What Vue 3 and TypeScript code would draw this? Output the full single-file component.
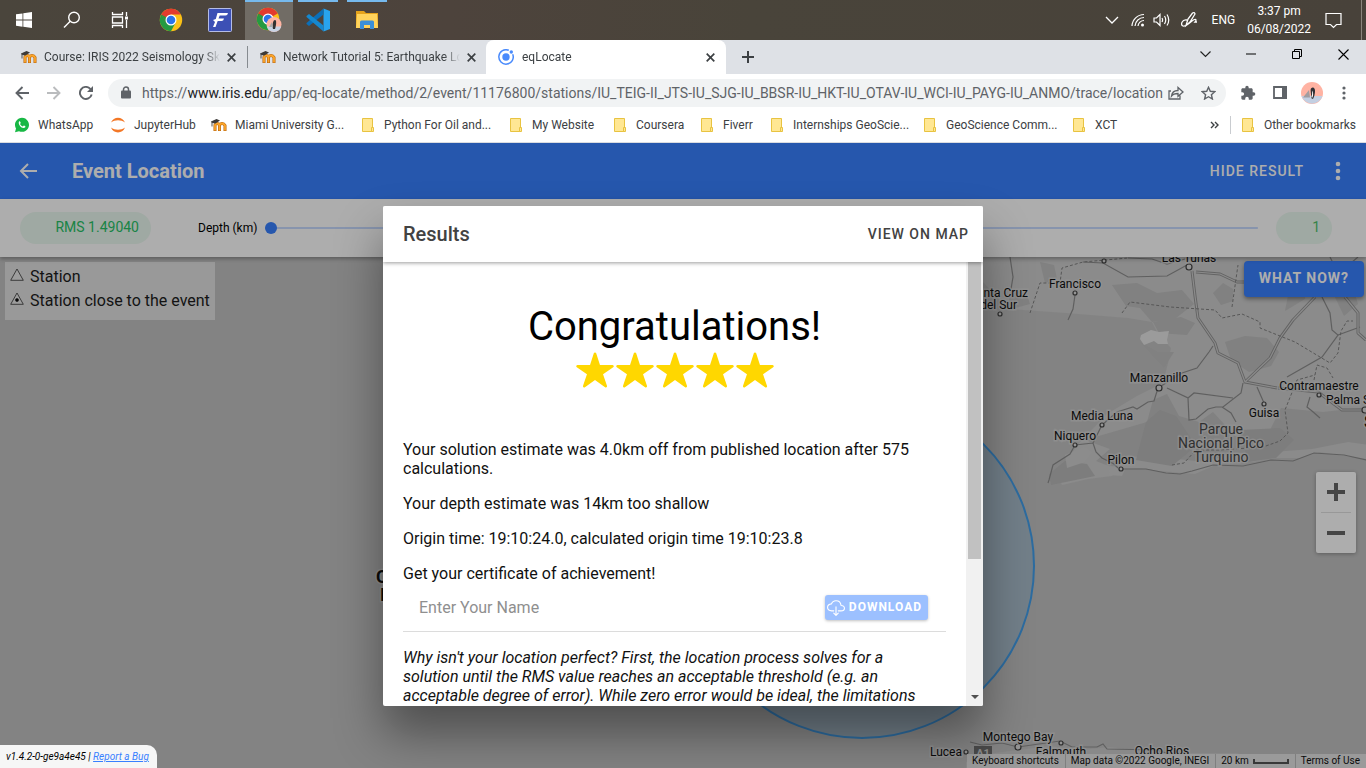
<script setup lang="ts">
import { ref } from 'vue'

interface Bookmark { label: string; icon: 'whatsapp' | 'jupyter' | 'moodle' | 'folder' }
interface Place { name: string; x: number; y: number; anchor?: 'start' | 'middle' | 'end'; kind?: 'park' | 'bold' }

const bookmarks: Bookmark[] = [
  { label: 'WhatsApp', icon: 'whatsapp' },
  { label: 'JupyterHub', icon: 'jupyter' },
  { label: 'Miami University G...', icon: 'moodle' },
  { label: 'Python For Oil and...', icon: 'folder' },
  { label: 'My Website', icon: 'folder' },
  { label: 'Coursera', icon: 'folder' },
  { label: 'Fiverr', icon: 'folder' },
  { label: 'Internships GeoScie...', icon: 'folder' },
  { label: 'GeoScience Comm...', icon: 'folder' },
  { label: 'XCT', icon: 'folder' },
]

const places: Place[] = [
  { name: 'Las Tunas', x: 1189, y: 262 },
  { name: 'Francisco', x: 1075, y: 288 },
  { name: 'Santa Cruz', x: 1028, y: 297, anchor: 'end' },
  { name: 'del Sur', x: 1017, y: 309, anchor: 'end' },
  { name: 'Manzanillo', x: 1159, y: 382 },
  { name: 'Media Luna', x: 1102, y: 420 },
  { name: 'Niquero', x: 1075, y: 440 },
  { name: 'Pilon', x: 1121, y: 464 },
  { name: 'Guisa', x: 1264, y: 417 },
  { name: 'Contramaestre', x: 1319, y: 390 },
  { name: 'Palma Soriano', x: 1326, y: 404, anchor: 'start' },
  { name: 'Parque', x: 1221, y: 434, kind: 'park' },
  { name: 'Nacional Pico', x: 1221, y: 448, kind: 'park' },
  { name: 'Turquino', x: 1221, y: 462, kind: 'park' },
  { name: 'Santiago', x: 1364, y: 428, anchor: 'start', kind: 'bold' },
  { name: 'Cayman', x: 376, y: 583, anchor: 'start', kind: 'bold' },
  { name: 'Islands', x: 380, y: 601, anchor: 'start', kind: 'bold' },
  { name: 'Montego Bay', x: 1018, y: 741 },
  { name: 'Falmouth', x: 1061, y: 756 },
  { name: 'Ocho Rios', x: 1162, y: 755 },
  { name: 'Lucea', x: 946, y: 756 },
]

const towns: [number, number, number][] = [
  [1104, 261, 2], [1189, 267, 3], [1075, 293, 2], [1000, 314, 2], [1159, 388, 3],
  [1102, 425, 2], [1075, 445, 2], [1121, 469, 2], [1264, 404, 2], [1319, 395, 2],
  [1365, 410, 3], [1018, 747, 3], [1061, 743, 2], [966, 752, 2],
]

const depth = ref(0)
const name = ref('')
</script>

<template>
  <div class="screen">
    <header class="taskbar">
      <nav class="launchers" aria-label="Taskbar">
        <button aria-label="Start"><svg width="16" height="16" viewBox="0 0 16 16" fill="#fff"><path d="M0 2.300 6.500 1.400V7.600H0zM7.300 1.300 16 0v7.600H7.300zM0 8.400h6.500v6.300L0 13.800zM7.300 8.400H16V16L7.300 14.800z" /></svg></button>
        <button aria-label="Search"><svg width="18" height="18" viewBox="0 0 18 18" fill="none" stroke="#fff" stroke-width="1.400"><circle cx="11" cy="6.500" r="5.300" /><path d="M7.200 10.300 1 16.500" /></svg></button>
        <button aria-label="Task view"><svg width="18" height="18" viewBox="0 0 18 18" fill="none" stroke="#fff" stroke-width="1.300"><path d="M1.500 1v2.500h10V1M1.500 17v-2.500h10V17M1.500 6h10v6h-10zM15.500 1v4M15.500 9v8" /><path d="M14 5.500h3v3h-3z" fill="#fff" stroke="none" /></svg></button>
        <button aria-label="Chrome">
          <svg width="24" height="24" viewBox="0 0 24 24"><circle cx="12" cy="12" r="11.200" fill="#fbc116" /><path d="M12 12 2.300 6.400A11.200 11.200 0 0 1 21.700 6.400z" fill="#e33b2e" /><path d="M2.300 6.400A11.200 11.200 0 0 0 12 23.200L16.400 15 12 12z" fill="#249a41" /><path d="M12 6.400h9.700l-5 8.200z" fill="#fbc116" /><path d="M2.300 6.400 12 6.400v5.600l-5 2.500z" fill="#e33b2e" /><path d="M2.300 6.400 7.100 14.700 12 12z" fill="#249a41" /><circle cx="12" cy="12" r="5.500" fill="#fff" /><circle cx="12" cy="12" r="4.300" fill="#2b74e8" /></svg>
        </button>
        <button aria-label="Fusion"><svg width="24" height="24" viewBox="0 0 24 24"><rect x=".5" y=".5" width="23" height="23" rx="1" fill="#3c50b5" stroke="#b4bce6" /><path d="M9.500 5H20q-.500 2.500-2.500 2.500h-5.800l-1.200 3H16q-.500 2.500-2.500 2.500H9.700L7.500 19H5l2-5-2-2 2.800-1z" fill="#fff" /></svg></button>
        <button class="running current" aria-label="Chrome, profile window">
          <svg width="28" height="26" viewBox="0 0 28 26"><circle cx="13" cy="12" r="11.200" fill="#fbc116" /><path d="M13 12 3.300 6.400A11.200 11.200 0 0 1 22.700 6.400z" fill="#e33b2e" /><path d="M3.300 6.400A11.200 11.200 0 0 0 13 23.200L17.400 15z" fill="#249a41" /><path d="M3.300 6.400H13V12l-5 2.500z" fill="#e33b2e" /><path d="M3.300 6.400 8.100 14.700 13 12z" fill="#249a41" /><circle cx="13" cy="12" r="5.500" fill="#fff" /><circle cx="13" cy="12" r="4.300" fill="#2b74e8" /><circle cx="19" cy="17.500" r="7.500" fill="#ffb4a2" /><path d="M11.800 19.500a7.500 7.500 0 0 0 14.400 0z" fill="#c8d3e4" /><path d="M18 22c-1-4 0-9 2-9s1 6 0 9z" fill="#333" /><path d="M14 20l3-5 1 5z" fill="#aaa" /></svg>
        </button>
        <button class="running" aria-label="Visual Studio Code"><svg width="24" height="24" viewBox="0 0 24 24"><path d="M17.500.500 24 3v18l-6.500 2.500z" fill="#28a4ee" /><path d="M17.500.500v6L3 18 .500 16 .500 15z" fill="#0b6fb8" /><path d="M17.500 23.500v-6L3 6 .500 8v1z" fill="#1588cf" /></svg></button>
        <button class="running" aria-label="File Explorer"><svg width="22" height="20" viewBox="0 0 22 20"><path d="M0 1h8l2 2h12v15H0z" fill="#e5a31c" /><path d="M1 4h20l1 14H0z" fill="#ffd35c" /><path d="M4 19v-7q0-1.500 1.500-1.500h11Q18 10.500 18 12v7h-4v-4H8v4z" fill="#3a8fd8" /></svg></button>
      </nav>
      <div class="tray">
        <button class="tray-up" aria-label="Show hidden icons"><svg width="14" height="8" viewBox="0 0 14 8" fill="none" stroke="#fff" stroke-width="1.300"><path d="m1 1 6 6 6-6" /></svg></button>
        <svg width="14" height="14" viewBox="0 0 14 14" fill="none" stroke="#fff" stroke-width="1.200"><path d="M1 13A12 12 0 0 1 13 1.500M4 13a9 9 0 0 1 9-8.500M7 13a6 6 0 0 1 6-5.500" /><circle cx="11.500" cy="12" r="1.500" fill="#fff" stroke="none" /></svg>
        <svg width="17" height="14" viewBox="0 0 17 14" fill="none" stroke="#fff" stroke-width="1.200"><path d="M1 5h2.500L7 1.500v11L3.500 9H1zM9 5q1.200 2 0 4M11.500 3q2.500 4 0 8M14 1.500q3.500 5.500 0 11" /></svg>
        <svg class="pen" width="18" height="18" viewBox="0 0 18 18" fill="none" stroke="#fff" stroke-width="1.300"><path d="M6 14.500 8 8l4.500-6q2-1.200 2.500 1L10 11zM7 9c-5-1-7 5-4 6s5-2 9-5 5-1 3 1h2" /></svg>
        <span class="lang">ENG</span>
        <time class="clock">3:37 pm<br>06/08/2022</time>
        <button class="notice" aria-label="Notifications"><svg width="17" height="17" viewBox="0 0 17 17" fill="none" stroke="#fff" stroke-width="1.200"><path d="M1 1.500h15v11h-4.500l-3 3-3-3H1z" /></svg></button>
      </div>
    </header>

    <div class="tabstrip">
      <div class="tab first">
        <svg class="fav" width="16" height="16" viewBox="0 0 16 16" fill="none"><path d="M4 14V8q.500-1.500 2-1.500T8.500 8v6m0-6q.500-1.500 2.500-1.500T14 8.500V14" stroke="#b8640c" stroke-width="3" /><path d="M4 13.500V8q.500-1.500 2-1.500T8.500 8v5.500m0-5.500q.500-1.500 2.500-1.500T14 8.500v5" stroke="#fba52b" stroke-width="1.800" /><path d="M0 4.500 5.500 2 9 3.500 4.500 6.500 1 6z" fill="#3c3a38" /><path d="M1 4.500v5" stroke="#555" /></svg>
        <a class="tab-title" href="#">Course: IRIS 2022 Seismology Skills</a>
        <button class="shut" aria-label="Close tab"><svg width="9" height="9" viewBox="0 0 9 9" stroke="#3c4043" stroke-width="1.700"><path d="m.700.700 7.600 7.600M8.300.700.700 8.300" /></svg></button>
      </div>
      <div class="tab">
        <svg class="fav" width="16" height="16" viewBox="0 0 16 16" fill="none"><path d="M4 14V8q.500-1.500 2-1.500T8.500 8v6m0-6q.500-1.500 2.500-1.500T14 8.500V14" stroke="#b8640c" stroke-width="3" /><path d="M4 13.500V8q.500-1.500 2-1.500T8.500 8v5.500m0-5.500q.500-1.500 2.500-1.500T14 8.500v5" stroke="#fba52b" stroke-width="1.800" /><path d="M0 4.500 5.500 2 9 3.500 4.500 6.500 1 6z" fill="#3c3a38" /><path d="M1 4.500v5" stroke="#555" /></svg>
        <a class="tab-title" href="#">Network Tutorial 5: Earthquake Location</a>
        <button class="shut" aria-label="Close tab"><svg width="9" height="9" viewBox="0 0 9 9" stroke="#3c4043" stroke-width="1.700"><path d="m.700.700 7.600 7.600M8.300.700.700 8.300" /></svg></button>
      </div>
      <div class="tab active">
        <svg class="fav" width="16" height="16" viewBox="0 0 16 16"><path d="M10.800 1.300A7.200 7.200 0 1 0 14.700 5.200" fill="none" stroke="#4a8bfc" stroke-width="1.500" /><circle cx="8" cy="8" r="3.700" fill="#4a8bfc" /><circle cx="13.300" cy="3" r="1.700" fill="#4a8bfc" /></svg>
        <a class="tab-title" href="#">eqLocate</a>
        <button class="shut" aria-label="Close tab"><svg width="9" height="9" viewBox="0 0 9 9" stroke="#3c4043" stroke-width="1.700"><path d="m.700.700 7.600 7.600M8.300.700.700 8.300" /></svg></button>
      </div>
      <button class="new-tab" aria-label="New tab"><svg width="12" height="12" viewBox="0 0 12 12" stroke="#3c4043" stroke-width="2"><path d="M6 0v12M0 6h12" /></svg></button>
      <div class="window-controls">
        <button aria-label="Search tabs"><svg width="11" height="7" viewBox="0 0 11 7" fill="none" stroke="#222" stroke-width="1.200"><path d="m.500.500 5 5 5-5" /></svg></button>
        <button aria-label="Minimise"><svg width="10" height="2" viewBox="0 0 10 2"><path d="M0 .500h10v1H0z" fill="#000" /></svg></button>
        <button aria-label="Restore"><svg width="10" height="10" viewBox="0 0 10 10" fill="none" stroke="#000"><path d="M.500 2.500h7v7h-7zM2.500 2.500v-2h7v7h-2" /></svg></button>
        <button aria-label="Close"><svg width="11" height="11" viewBox="0 0 11 11" stroke="#000" stroke-width="1.100"><path d="m.500.500 10 10M10.500.500l-10 10" /></svg></button>
      </div>
    </div>

    <div class="navbar">
      <button class="nav-btn" aria-label="Back"><svg width="14" height="14" viewBox="0 0 14 14" fill="none" stroke="#5f6368" stroke-width="1.900"><path d="M14 7H1.500M7.500 1l-6 6 6 6" /></svg></button>
      <button class="nav-btn" aria-label="Forward"><svg width="14" height="14" viewBox="0 0 14 14" fill="none" stroke="#babcbe" stroke-width="1.900"><path d="M0 7h12.500M6.500 1l6 6-6 6" /></svg></button>
      <button class="nav-btn" aria-label="Reload"><svg width="14" height="14" viewBox="0 0 14 14" fill="none" stroke="#5f6368" stroke-width="1.900"><path d="M12.700 8.500A6 6 0 1 1 11.300 2.800L13 4.500" /><path d="M14 0v6H8z" fill="#5f6368" stroke="none" /></svg></button>
      <div class="omnibox">
        <svg width="10" height="13" viewBox="0 0 10 13"><path d="M2.500 5V3.500a2.500 2.500 0 0 1 5 0V5" fill="none" stroke="#5f6368" stroke-width="1.500" /><rect x="0" y="4.500" width="10" height="8" rx="1" fill="#5f6368" /></svg>
        <a class="url" href="#">https://<b>www.iris.edu</b>/app/eq-locate/method/2/event/11176800/stations/IU_TEIG-II_JTS-IU_SJG-IU_BBSR-IU_HKT-IU_OTAV-IU_WCI-IU_PAYG-IU_ANMO/trace/location</a>
        <button aria-label="Share"><svg width="16" height="14" viewBox="0 0 16 14" fill="none" stroke="#5f6368" stroke-width="1.300"><path d="M3 5H1v8h11V9.500M3.500 10c.500-4 3-5.500 6.500-5.500V1.500l5 4.500-5 4.300V7.500C7 7.500 5 8 3.500 10z" /></svg></button>
        <button aria-label="Bookmark this tab"><svg width="15" height="14" viewBox="0 0 15 14" fill="none" stroke="#5f6368" stroke-width="1.400"><path d="m7.500 1.300 1.800 4 4.500.400-3.400 3 1 4.300-3.900-2.300L3.600 13l1-4.300-3.400-3 4.500-.400z" /></svg></button>
      </div>
      <button class="tool" aria-label="Extensions"><svg width="16" height="16" viewBox="0 0 24 24" fill="#5f6368"><path d="M20.500 11H19V7c0-1.100-.900-2-2-2h-4V3.500a2.500 2.500 0 0 0-5 0V5H4c-1.100 0-2 .900-2 2v3.800h1.500a2.700 2.700 0 0 1 0 5.400H2V20c0 1.100.900 2 2 2h3.800v-1.500a2.700 2.700 0 0 1 5.400 0V22H17c1.100 0 2-.900 2-2v-4h1.500a2.500 2.500 0 0 0 0-5z" /></svg></button>
      <button class="tool" aria-label="Side panel"><svg width="14" height="13" viewBox="0 0 14 13"><path d="M1 1h12v11H1z" fill="#fff" stroke="#5f6368" stroke-width="1.800" /><path d="M9 0h5v13H9z" fill="#5f6368" /></svg></button>
      <button class="tool" aria-label="Profile"><svg width="22" height="22" viewBox="0 0 22 22"><circle cx="11" cy="11" r="11" fill="#ffb3a3" /><path d="M.500 14a11 11 0 0 0 21 0z" fill="#c3cfe2" /><path d="M2 15.500 8 8l1 7.500z" fill="#a29da0" /><path d="M10 16c.500-4-1-8 0-9.500 2-2 4.500-.500 4 3.500-.300 3-1 5-2 7z" fill="#303036" /><path d="M10.200 15.500q1.500-4 .800-7 2 3 .500 7z" fill="#fff" /></svg></button>
      <button class="menu" aria-label="Chrome menu"><svg width="4" height="14" viewBox="0 0 4 14" fill="#5f6368"><circle cx="2" cy="2" r="1.600" /><circle cx="2" cy="7" r="1.600" /><circle cx="2" cy="12" r="1.600" /></svg></button>
    </div>

    <nav class="bookmarks" aria-label="Bookmarks">
      <ul>
        <li v-for="b in bookmarks" :key="b.label">
          <a href="#">
            <svg v-if="b.icon === 'whatsapp'" width="16" height="16" viewBox="0 0 16 16"><path d="M1 15.200 2 11.500A7 7 0 1 1 5 14.200z" fill="#18b845" /><path d="M5 4.500c1-1 1.500.500 1.800 1.500L6 7c.600 1.200 1.500 2 2.800 2.500l1-1c1 .300 2 .800 1.500 1.700C9 13 3.500 8 5 4.500z" fill="#fff" /></svg>
            <svg v-else-if="b.icon === 'jupyter'" width="16" height="16" viewBox="0 0 16 16" fill="#f37726"><path d="M1 5.500C3.500-1 12.500-1 15 5.500 11 2.500 5 2.500 1 5.500zM1 10.500C3.500 17 12.500 17 15 10.500c-4 3-10 3-14 0z" /></svg>
            <svg v-else-if="b.icon === 'moodle'" width="16" height="16" viewBox="0 0 16 16" fill="none"><path d="M4 14V8q.500-1.500 2-1.500T8.500 8v6m0-6q.500-1.500 2.500-1.500T14 8.500V14" stroke="#b8640c" stroke-width="3" /><path d="M4 13.500V8q.500-1.500 2-1.500T8.500 8v5.500m0-5.500q.500-1.500 2.500-1.500T14 8.500v5" stroke="#fba52b" stroke-width="1.800" /><path d="M0 4.500 5.500 2 9 3.500 4.500 6.500 1 6z" fill="#3c3a38" /><path d="M1 4.500v5" stroke="#555" /></svg>
            <svg v-else width="16" height="16" viewBox="0 0 16 16" fill="#ffe793" stroke="#e8c341"><path d="M2.500 1.500h10v13h-10z" /><path d="M11.500 10.500h2v4h-2z" /></svg>
            <span>{{ b.label }}</span>
          </a>
        </li>
      </ul>
      <button class="more" aria-label="More bookmarks"><svg width="9" height="8" viewBox="0 0 9 8" fill="none" stroke="#3c4043" stroke-width="1.400"><path d="m1 1 3 3-3 3M5 1l3 3-3 3" /></svg></button>
      <a class="other" href="#"><svg width="16" height="16" viewBox="0 0 16 16" fill="#ffe793" stroke="#e8c341"><path d="M2.500 1.500h10v13h-10z" /><path d="M11.500 10.500h2v4h-2z" /></svg><span>Other bookmarks</span></a>
    </nav>

    <main class="app">
      <header class="app-header">
        <button aria-label="Back"><svg width="18" height="16" viewBox="0 0 18 16" fill="none" stroke="#fff" stroke-width="2"><path d="M18 8H2M9 1 2 8l7 7" /></svg></button>
        <h1>Event Location</h1>
        <button class="text-btn">HIDE RESULT</button>
        <button class="dots" aria-label="More"><svg width="6" height="20" viewBox="0 0 6 20" fill="#fff"><circle cx="3" cy="3" r="2.300" /><circle cx="3" cy="10" r="2.300" /><circle cx="3" cy="17" r="2.300" /></svg></button>
      </header>

      <div class="controls">
        <span class="chip rms">RMS 1.49040</span>
        <label for="depth">Depth (km)</label>
        <input id="depth" v-model="depth" type="range" min="0" max="100">
        <output class="chip count" for="depth">1</output>
      </div>

      <section class="map" aria-label="Map">
        <svg class="canvas" viewBox="0 257 1366 511" preserveAspectRatio="xMaxYMid slice">
          <rect y="257" width="1366" height="511" fill="#c2c2c2" />
          <path d="M960 257H1366V459l-28-4-18-3-20 6-25 0-22 4-20-1-20 5-18 8-35-3-20-3-20 1-8 7-24 3-26 6-2-5 3-12 8-14 10-13 26-27 30-18 26-13 5-20 3-15-13-14-6-12-24-4-62-5-58-4z" fill="#cdcdcd" />
          <g fill="#bebebe">
            <path d="M1112 285l25-2 20 10 25-3 12 14-18 14-24 4-12-14-14-2zM1010 290l16 2 4 12-22 6zM1213 293l10-10 10 6v12l-12 4zM1153 322l28-5 14 6-8 12-28-2zM1225 342l20-6 22 2 12 14-8 14-22 6-18-12zM1330 287l22-3 6 20-14 12zM1140 342l18 10 16 0-10 16zM1040 262l14 3 3 14-12 4zM1290 285l18-6-3 20-20 12z" />
            <path d="M1085 440l62-18 6-22 14-6 12 22 20 6 14-10 22 24 34-4 12-24 42 4 55-6v40l-30-4-36 7-40 3-40 1-25 9-60-6-18 1-15 11-18-7 14-12z" />
          </g>
          <path d="M1049 474l16-13 22 3 8 12-44 9zM1160 410l16 6 20 30-24 20-36-6 10-38zM1240 430l40-2 14 12-18 18-28 4z" fill="#b8b8b8" />
          <path d="M1065 455l19-8 9 5-8 10-18 6zM1110 466l16 1-4 9-13-1z" fill="#cecece" />
          <path d="M1141 335l10-5 8 2 10-1-2 9 1 4-10 0-4-3-10 4-4-6z" fill="#e5e5e5" />
          <path d="M966 768v-6l14-7 30-4 40-5 30 4 30-3 46 6h80l30 8v7z" fill="#cacaca" />

          <g fill="none" stroke="#8d8d8d" stroke-width="1.200">
            <path d="M1010 257l3 20-2 12M1083 262l20 1 25 14 39-1 20-11M1075 295l-2 14-5 11M1128 258l24 1 15 5 18-5M1322 297l8 16 2 17 6 5-16 22-35 20M1330 257l5 10M1358 257l-14 12" />
            <path d="M1048 483l1-3 4-15 17-11 5-9 18-2 9-18 15-13 16-5 4 2 11-7 6-1 4-13 24-15 15-5 12-16 4-6M1093 443l3 9 6 6 12 6 4 4M1121 469l25 0 20 4 14 1 12-3 21-6 30 1 28-6 22 1 21-8 30 2 23 5" />
            <path d="M1167 388l21 10 1 22 7-1 12-10 8-2 7 0 18-14 2-10M1188 398l6-5 39 5M1222 407l9 6 5 9M1257 387l7 16M1310 397l-3 10 5 4 8 7M1338 335l22-8" />
            <path d="M970 742l12 3 20-2 16 4 42-6 12 6 25 0 6-3 4 5 50 1 22 7" />
          </g>
          <g fill="none" stroke="#929292" stroke-width="3" stroke-linejoin="round">
            <path d="M1192 271l3 25 3 22 17 25 3 10 20 10 7 19 32 6M1196 272l24 2 17 8h8M1245 382l25-24 10-20 13-18 22-23M1278 388l40 4 24 18h24M1345 297l13 16v20l8 7" />
          </g>
          <g fill="none" stroke="#cdcdcd" stroke-width="1.200" stroke-linejoin="round">
            <path d="M1192 271l3 25 3 22 17 25 3 10 20 10 7 19 32 6M1196 272l24 2 17 8h8M1245 382l25-24 10-20 13-18 22-23M1278 388l40 4 24 18h24M1345 297l13 16v20l8 7" />
          </g>
          <g fill="none" stroke="#818181" stroke-dasharray="3 2">
            <path d="M1030 313l10-30 20 0 2-15 21-6 45-4M1122 313l8-11 40 5 45 3 7 8 20-4 18 8v6l35 14 35 21 8-10 3-22 6-10h6M1232 307l6-42M1172 465l12-2 12-13 24 0 43-3 17-6 8-8-3-23 12-30 18-5" />
            <path d="M1314 380l3-15 10 3 6 10" />
          </g>
          <path d="M974 746h18v14h-18z" fill="#6d6d6d" />
          <text class="shield" x="983" y="757" text-anchor="middle">A1</text>

          <circle class="radius" cx="862" cy="566" r="172" />

          <circle v-for="(t, i) in towns" :key="i" :cx="t[0]" :cy="t[1]" :r="t[2]" fill="#dadada" stroke="#444" stroke-width="1.200" />
          <text v-for="p in places" :key="p.name" :x="p.x" :y="p.y" :text-anchor="p.anchor ?? 'middle'" class="place" :class="p.kind">{{ p.name }}</text>
        </svg>

        <ul class="legend">
          <li><svg width="14" height="13" viewBox="0 0 14 13" fill="#e8e8e8" stroke="#333" stroke-width=".8"><path d="M7 1 .700 12.300h12.600z" /></svg>Station</li>
          <li><svg width="14" height="13" viewBox="0 0 14 13" fill="#e8e8e8" stroke="#333" stroke-width=".8"><path d="M7 1 .700 12.300h12.600z" /><circle cx="7" cy="8" r="1.500" fill="#000" /></svg>Station close to the event</li>
        </ul>
        <button class="what-now">WHAT NOW?</button>
        <div class="zoom">
          <button aria-label="Zoom in"><svg width="18" height="18" viewBox="0 0 18 18" fill="#666"><path d="M7 0h4v7h7v4h-7v7H7v-7H0V7h7z" /></svg></button>
          <button aria-label="Zoom out"><svg width="18" height="4" viewBox="0 0 18 4" fill="#666"><path d="M0 0h18v4H0z" /></svg></button>
        </div>
        <footer class="credits">
          <button>Keyboard shortcuts</button>
          <span>Map data ©2022 Google, INEGI</span>
          <button class="scale">20 km <i></i></button>
          <a href="#">Terms of Use</a>
        </footer>
      </section>

      <div class="backdrop">
        <section class="modal" role="dialog" aria-labelledby="results-title">
          <header class="modal-header">
            <h2 id="results-title">Results</h2>
            <button>VIEW ON MAP</button>
          </header>
          <div class="modal-main">
            <div class="modal-body">
              <p class="congrats">Congratulations!</p>
              <div class="stars" role="img" aria-label="Five stars">
                <svg v-for="n in 5" :key="n" width="40" height="40" viewBox="0 0 512 512" fill="#ffd700"><path d="M394 480a16 16 0 01-9.390-3L256 383.760 127.390 477a16 16 0 01-24.550-18.080L153 310.350 23 221.200a16 16 0 019-29.200h160.380l48.400-148.950a16 16 0 0130.440 0l48.400 149H480a16 16 0 019.050 29.200L359 310.350l50.130 148.530A16 16 0 01394 480z" /></svg>
              </div>
              <p>Your solution estimate was 4.0km off from published location after 575 calculations.</p>
              <p>Your depth estimate was 14km too shallow</p>
              <p>Origin time: 19:10:24.0, calculated origin time 19:10:23.8</p>
              <p class="lead"><label for="cert-name">Get your certificate of achievement!</label></p>
              <form class="item" @submit.prevent>
                <input id="cert-name" v-model="name" type="text" placeholder="Enter Your Name">
                <button class="download" type="submit">
                  <svg width="18" height="18" viewBox="0 0 512 512" fill="none" stroke="#fff" stroke-width="32" stroke-linecap="round" stroke-linejoin="round"><path d="M320 336h76c55 0 100-21.210 100-75.600s-53-73.470-96-75.600C391.110 99.740 329 48 256 48c-69 0-113.440 45.790-128 91.200-60 5.700-112 35.880-112 98.400S70 336 136 336h56M192 400.100l64 63.900 64-63.900M256 224v224" /></svg>
                  DOWNLOAD
                </button>
              </form>
              <p class="why"><em>Why isn't your location perfect? First, the location process solves for a solution until the RMS value reaches an acceptable threshold (e.g. an acceptable degree of error). While zero error would be ideal, the limitations</em></p>
            </div>
            <div class="scrollbar" aria-hidden="true">
              <div class="thumb"></div>
              <svg width="8" height="4" viewBox="0 0 8 4" fill="#505050"><path d="M0 0h8L4 4z" /></svg>
            </div>
          </div>
        </section>
      </div>

      <div class="version">v1.4.2-0-ge9a4e45 | <a href="#">Report a Bug</a></div>
    </main>
  </div>
</template>

<style>
body { margin: 0; }
</style>

<style scoped>
* { box-sizing: border-box; }
button {
  display: flex; align-items: center; justify-content: center;
  margin: 0; padding: 0; border: 0; background: none; color: inherit; font: inherit;
}
a { color: inherit; text-decoration: none; }
ul { list-style: none; margin: 0; padding: 0; }
svg { flex: none; display: block; }

.screen {
  display: flex; flex-direction: column; height: 100vh; overflow: hidden;
  font-family: Roboto, "Open Sans", sans-serif; font-size: 12px; color: #3c4043;
}

.taskbar { display: flex; justify-content: space-between; flex: none; height: 40px; background: linear-gradient(90deg, #4a453c, #4d433c 33%, #49443a 55%, #48423a); }
.launchers { display: flex; }
.launchers button { position: relative; width: 48px; height: 40px; margin-right: 1px; }
.launchers button:nth-child(-n+2) { margin-right: 0; }
.launchers button:nth-child(3) { margin-right: 3px; }
.launchers .current { background: #716c65; }
.running::before { content: ""; position: absolute; top: 0; left: 4px; right: 4px; height: 2px; background: #76b9ed; }
.current::before { left: 0; right: 0; }
.tray { display: flex; align-items: center; gap: 8px; color: #fff; padding-right: 4px; border-right: 1px solid #8a857d; margin-right: 4px; }
.tray-up { width: 14px; height: 40px; margin-right: 4px; }
.pen { margin-left: 2px; }
.lang { margin: 0 4px 0 6px; }
.clock { text-align: center; line-height: 18px; white-space: nowrap; padding-bottom: 1px; }
.notice { width: 40px; height: 40px; margin: 0 4px 0 -6px; }

.tabstrip { display: flex; flex: none; height: 34px; background: #dee1e6; }
.tab { display: flex; align-items: center; gap: 7px; width: 239px; padding: 0 8px 0 12px; }
.tab.first { width: 248px; padding-left: 21px; border-right: 1px solid #868b90; border-image: linear-gradient(transparent 20%, #868b90 20% 80%, transparent 80%) 1; }
.tab-title { flex: 1; overflow: hidden; white-space: nowrap; mask-image: linear-gradient(90deg, #000 calc(100% - 16px), transparent); }
.tab.active { width: 240px; gap: 8px; margin-left: -1px; background: #fff; border-radius: 8px 8px 0 0; }
.shut { width: 16px; height: 16px; margin-left: -4px; }
.new-tab { width: 44px; }
.window-controls { display: flex; height: 28px; margin-left: auto; }
.window-controls button { width: 46px; }

.navbar { display: flex; align-items: center; flex: none; height: 37px; background: #fff; padding-left: 6px; }
.nav-btn { width: 32px; height: 28px; }
.omnibox { display: flex; align-items: center; flex: 1; min-width: 0; height: 28px; margin: 0 6px; padding: 0 10px 0 13px; background: #f1f3f4; border-radius: 14px; }
.url { flex: 1; min-width: 0; margin-left: 11px; overflow: hidden; white-space: nowrap; font-size: 14px; color: #5f6368; }
.url b { font-weight: 400; color: #202124; }
.omnibox button { width: 16px; height: 28px; }
.omnibox button:last-child { margin-left: 16px; }
.tool { width: 32px; height: 28px; }
.menu { width: 32px; height: 28px; margin-right: 6px; }

.bookmarks { display: flex; align-items: center; flex: none; height: 32px; padding: 0 10px 4px 14px; background: #fff; border-bottom: 1px solid #dadce0; }
.bookmarks ul { display: grid; grid-template-columns: 96px 101px 149px 148px 104px 87px 70px 153px 149px 60px; }
.bookmarks a { display: flex; align-items: center; gap: 8px; white-space: nowrap; }
.more { width: 18px; height: 18px; margin-left: auto; }
.other { height: 18px; margin-left: 6px; padding-left: 9px; border-left: 1px solid #c9ccd0; }

.app { position: relative; display: flex; flex-direction: column; flex: 1; min-height: 0; font-family: Roboto, sans-serif; font-size: 16px; color: #000; }
.app-header { display: flex; align-items: center; flex: none; height: 56px; padding: 0 25px 0 19px; background: #3880ff; color: #fff; }
.app-header h1 { flex: 1; margin: 0 0 0 35px; font-size: 20px; font-weight: 700; }
.text-btn { margin-right: 31px; font-size: 14px; font-weight: 500; letter-spacing: 1px; }
.controls { display: flex; align-items: center; flex: none; height: 58px; padding: 0 34px 0 20px; background: #fff; box-shadow: 0 2px 4px rgba(0, 0, 0, .3); z-index: 1; }
.chip { display: flex; align-items: center; justify-content: flex-end; height: 32px; padding: 0 12px 2px; border-radius: 16px; background: #ebf9f0; color: #2dd36f; font-size: 14px; }
.rms { width: 131px; color: #28c367; }
.count { width: 56px; color: #4fc36b; }
.controls label { margin: 0 8px 0 47px; font-size: 12px; }
.controls input { flex: 1; min-width: 0; height: 12px; margin: 0 18px 0 0; appearance: none; background: linear-gradient(#c7daff, #c7daff) center / 100% 2px no-repeat; }
.controls input::-webkit-slider-thumb { appearance: none; width: 12px; height: 12px; border-radius: 50%; background: #3880ff; }

.map { position: relative; flex: 1; min-height: 0; overflow: hidden; background: #c2c2c2; }
.canvas { position: absolute; inset: 0; width: 100%; height: 100%; }
.place { font-size: 12px; fill: #111; stroke: #d8d8d8; stroke-width: 3px; stroke-opacity: .7; paint-order: stroke; }
.place.park { font-size: 14px; fill: #484848; }
.place.bold { font-size: 18px; font-weight: 700; }
.shield { font-size: 11px; font-weight: 700; fill: #ccc; }
.radius { fill: #40a0ee; fill-opacity: .2; stroke: #43a0ec; stroke-width: 2px; }
.legend { position: absolute; top: 5px; left: 5px; padding: 3px 5px 7px 5px; background: #e2e2e2; line-height: 24px; color: #1c1c1c; }
.legend li { display: flex; gap: 6px; }
.legend svg { margin-top: 3px; }
.what-now { position: absolute; top: 4px; right: 2px; height: 36px; padding: 0 15px 2px; border-radius: 4px; background: #3880ff; color: #fff; font-size: 14px; font-weight: 700; letter-spacing: 1px; box-shadow: 0 2px 4px rgba(0, 0, 0, .4); }
.zoom { position: absolute; right: 10px; top: 215px; width: 40px; padding: 0 5px; border-radius: 2px; background: #fff; box-shadow: 0 1px 4px rgba(0, 0, 0, .3); }
.zoom button { width: 30px; height: 40px; }
.zoom button + button { border-top: 1px solid #e0e0e0; height: 41px; }
.credits { position: absolute; right: 0; bottom: 0; display: flex; height: 14px; background: #e4e4e4; color: #111; font-size: 10px; line-height: 14px; white-space: nowrap; }
.credits > * { padding: 0 6px 0 5px; }
.credits > * + * { border-left: 1px solid #bbb; }
.scale i { width: 36px; height: 5px; margin-left: 4px; border: 2px solid #555; border-top: 0; }

.backdrop { position: absolute; inset: 0; z-index: 2; display: flex; align-items: center; justify-content: center; background: rgba(0, 0, 0, .32); }
.modal { display: flex; flex-direction: column; width: 600px; max-width: 100%; height: 500px; max-height: 100%; overflow: hidden; border-radius: 2px; background: #fff; box-shadow: 0 28px 48px rgba(0, 0, 0, .4); }
.modal-header { position: relative; z-index: 1; display: flex; align-items: center; justify-content: space-between; flex: none; height: 56px; padding: 0 14px 0 20px; background: #fff; color: #424242; box-shadow: 0 1px 4px rgba(0, 0, 0, .4); }
.modal-header h2 { margin: 0; font-size: 20px; font-weight: 500; }
.modal-header button { font-size: 14px; font-weight: 500; letter-spacing: 1px; }
.modal-main { display: flex; flex: 1; min-height: 0; }
.modal-body { flex: 1; padding: 41px 20px 0; overflow-y: auto; scrollbar-width: none; line-height: 19px; color: #111; }
.modal-body p { margin: 0 0 16px; }
.modal-body .congrats { margin: 0; font-size: 40px; line-height: 47px; text-align: center; color: #000; }
.stars { display: flex; justify-content: center; margin-bottom: 50px; }
.modal-body .lead { margin: 0; }
.item { display: flex; align-items: center; height: 49px; margin-bottom: 16px; padding: 2px 18px 0 16px; border-bottom: 1px solid #dcdcdc; }
.item input { flex: 1; min-width: 0; padding: 0; border: 0; outline: 0; background: none; font: inherit; color: #111; }
.item input::placeholder { color: #8f8f8f; opacity: 1; }
.download { gap: 4px; height: 25px; padding: 0 6px 0 2px; border-radius: 3px; background: #9cc0ff; color: #fff; font-size: 12px; font-weight: 700; letter-spacing: 1px; box-shadow: 0 1px 3px rgba(0, 0, 0, .25); }
.modal-body .why { padding-right: 12px; }
.scrollbar { display: flex; flex-direction: column; justify-content: space-between; align-items: center; width: 17px; padding-bottom: 7px; background: #f1f1f1; }
.thumb { width: 13px; height: 297px; background: #c1c1c1; }

.version { position: absolute; left: 0; bottom: 0; z-index: 3; height: 23px; padding: 0 8px 0 6px; border-radius: 0 10px 0 0; background: #f6f6f6; font-size: 10px; font-style: italic; line-height: 23px; }
.version a { color: #3880ff; text-decoration: underline; }
</style>
